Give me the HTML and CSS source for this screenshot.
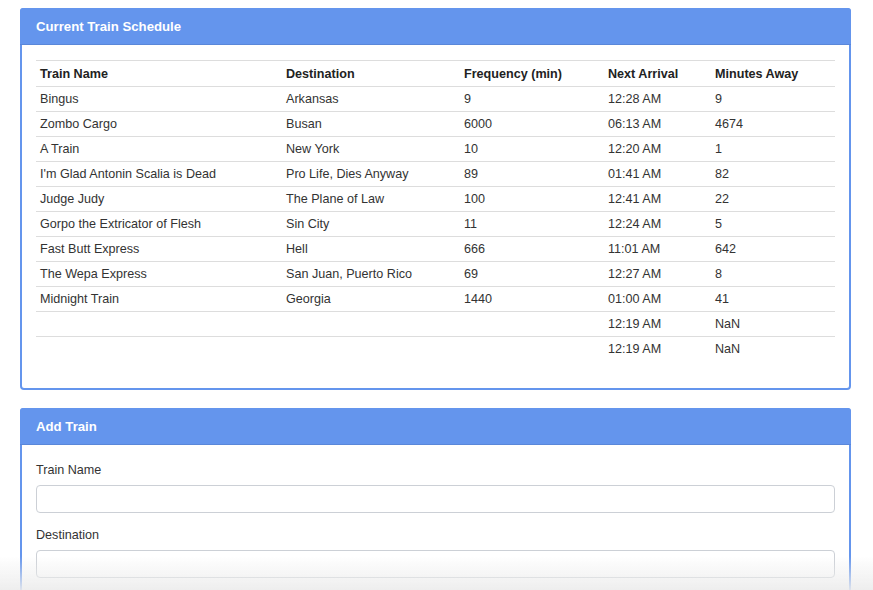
FILE: index.html
```html
<!DOCTYPE html>
<html>
<head>
<meta charset="utf-8">
<link rel="stylesheet" href="styles.css">
</head>
<body>
<div class="container">
  <div class="panel">
    <div class="panel-heading">Current Train Schedule</div>
    <div class="panel-body schedule-body">
      <table class="table">
        <colgroup>
          <col class="c1"><col class="c2"><col class="c3"><col class="c4"><col class="c5">
        </colgroup>
        <thead>
          <tr><th>Train Name</th><th>Destination</th><th>Frequency (min)</th><th>Next Arrival</th><th>Minutes Away</th></tr>
        </thead>
        <tbody>
          <tr><td>Bingus</td><td>Arkansas</td><td>9</td><td>12:28 AM</td><td>9</td></tr>
          <tr><td>Zombo Cargo</td><td>Busan</td><td>6000</td><td>06:13 AM</td><td>4674</td></tr>
          <tr><td>A Train</td><td>New York</td><td>10</td><td>12:20 AM</td><td>1</td></tr>
          <tr><td>I'm Glad Antonin Scalia is Dead</td><td>Pro Life, Dies Anyway</td><td>89</td><td>01:41 AM</td><td>82</td></tr>
          <tr><td>Judge Judy</td><td>The Plane of Law</td><td>100</td><td>12:41 AM</td><td>22</td></tr>
          <tr><td>Gorpo the Extricator of Flesh</td><td>Sin City</td><td>11</td><td>12:24 AM</td><td>5</td></tr>
          <tr><td>Fast Butt Express</td><td>Hell</td><td>666</td><td>11:01 AM</td><td>642</td></tr>
          <tr><td>The Wepa Express</td><td>San Juan, Puerto Rico</td><td>69</td><td>12:27 AM</td><td>8</td></tr>
          <tr><td>Midnight Train</td><td>Georgia</td><td>1440</td><td>01:00 AM</td><td>41</td></tr>
          <tr><td></td><td></td><td></td><td>12:19 AM</td><td>NaN</td></tr>
          <tr><td></td><td></td><td></td><td>12:19 AM</td><td>NaN</td></tr>
        </tbody>
      </table>
    </div>
  </div>
  <div class="panel">
    <div class="panel-heading">Add Train</div>
    <div class="panel-body form-body">
      <div class="form-group">
        <label class="label">Train Name</label>
        <input class="input" type="text">
      </div>
      <div class="form-group">
        <label class="label">Destination</label>
        <input class="input" type="text">
      </div>
    </div>
  </div>
</div>
<div class="bottom-fade"></div>
</body>
</html>
```

FILE: styles.css
```css
html, body {
  margin: 0;
  padding: 0;
  background: #fff;
  font-family: "Liberation Sans", Arial, sans-serif;
  font-size: 12.6px;
  color: #333;
}
.container {
  padding: 8px 22px 0 20px;
}
.panel {
  border: 2px solid #6495ed;
  border-radius: 4px;
  margin-bottom: 18px;
  background: #fff;
}
.panel-heading {
  background: #6495ed;
  color: #fff;
  font-weight: bold;
  font-size: 13.2px;
  height: 36px;
  line-height: 38px;
  margin: -2px -2px 0 -2px;
  padding: 0 16px;
  border-radius: 3px 3px 0 0;
  border-bottom: 1px solid #5a87d9;
}
.panel-body {
  padding: 15px 14px 0 14px;
}
.schedule-body {
  padding-bottom: 27px;
}
.table {
  width: 100%;
  border-collapse: collapse;
  table-layout: fixed;
}
.c1 { width: 246px; }
.c2 { width: 178px; }
.c3 { width: 144px; }
.c4 { width: 107px; }
.c5 { width: auto; }
.table th,
.table td {
  text-align: left;
  padding: 0 4px;
  height: 24px;
  border-top: 1px solid #ddd;
  vertical-align: middle;
  white-space: nowrap;
}
.table th {
  font-weight: bold;
  color: #222;
  padding-top: 1px;
}
.form-body {
  padding-top: 18px;
}
.form-group {
  margin-bottom: 15px;
}
.label {
  display: block;
  line-height: 15px;
  margin-bottom: 7px;
}
.input {
  display: block;
  width: 100%;
  box-sizing: border-box;
  height: 28px;
  border: 1px solid #ccd0d6;
  border-radius: 4px;
  background: #fff;
  margin: 0;
}
.bottom-fade {
  position: fixed;
  left: 0;
  right: 0;
  bottom: 0;
  height: 34px;
  background: linear-gradient(to bottom, rgba(236,236,236,0), rgba(236,236,236,0.9));
  pointer-events: none;
}
```
